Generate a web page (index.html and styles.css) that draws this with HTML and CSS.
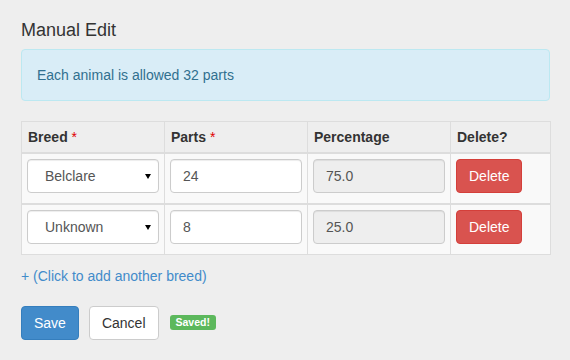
FILE: index.html
```html
<!DOCTYPE html>
<html>
<head>
<meta charset="utf-8">
<link rel="stylesheet" href="styles.css">
</head>
<body>
<div class="page">
  <h4 class="title">Manual Edit</h4>
  <div class="alert">Each animal is allowed 32 parts</div>
  <table class="breeds">
    <colgroup>
      <col class="c-wide"><col class="c-wide"><col class="c-wide"><col class="c-narrow">
    </colgroup>
    <thead>
      <tr>
        <th>Breed <span class="req">*</span></th>
        <th>Parts <span class="req">*</span></th>
        <th>Percentage</th>
        <th>Delete?</th>
      </tr>
    </thead>
    <tbody>
      <tr>
        <td><div class="select-wrap"><select class="control select"><option>Belclare</option></select><span class="arrow"></span></div></td>
        <td><input class="control" type="text" value="24"></td>
        <td><input class="control readonly" type="text" value="75.0" readonly></td>
        <td><button class="btn btn-danger">Delete</button></td>
      </tr>
    </tbody>
    <tbody>
      <tr>
        <td><div class="select-wrap"><select class="control select"><option>Unknown</option></select><span class="arrow"></span></div></td>
        <td><input class="control" type="text" value="8"></td>
        <td><input class="control readonly" type="text" value="25.0" readonly></td>
        <td><button class="btn btn-danger">Delete</button></td>
      </tr>
    </tbody>
  </table>
  <a class="add-link" href="#">+ (Click to add another breed)</a>
  <div class="actions">
    <button class="btn btn-primary">Save</button>
    <button class="btn btn-default">Cancel</button>
    <span class="label-success">Saved!</span>
  </div>
</div>
</body>
</html>
```
FILE: styles.css
```css
html, body {
  margin: 0;
  padding: 0;
  background: #eeeeee;
}
body {
  font-family: "Liberation Sans", Arial, sans-serif;
  font-size: 14px;
  line-height: 20px;
  color: #333333;
}
.page {
  padding: 20px 20px 0 21px;
  width: 529px;
}
.title {
  margin: 0 0 9px 0;
  font-size: 18px;
  font-weight: normal;
  line-height: 20px;
  color: #333333;
}
.alert {
  background: #d9edf7;
  border: 1px solid #bce8f1;
  border-radius: 4px;
  color: #31708f;
  padding: 15px 15px;
  line-height: 20px;
}
.breeds {
  margin-top: 20px;
  width: 529px;
  table-layout: fixed;
  border-collapse: collapse;
  border: 1px solid #dddddd;
}
.c-wide { width: 143px; }
.c-narrow { width: 100px; }
.breeds th {
  text-align: left;
  font-weight: bold;
  padding: 5px 5px 5px 6px;
  border: 1px solid #dddddd;
  border-bottom: 2px solid #dddddd;
  line-height: 20px;
}
.breeds td {
  padding: 5px 5px 10px 5px;
  border: 1px solid #dddddd;
  background: #f9f9f9;
  vertical-align: top;
}
.breeds tbody + tbody {
  border-top: 2px solid #dddddd;
}
.req {
  color: #e00000;
  font-weight: normal;
}
.control {
  display: block;
  box-sizing: border-box;
  width: 100%;
  height: 34px;
  margin: 0;
  padding: 6px 12px;
  font-family: "Liberation Sans", Arial, sans-serif;
  font-size: 14px;
  line-height: 20px;
  color: #555555;
  background: #ffffff;
  border: 1px solid #cccccc;
  border-radius: 4px;
  box-shadow: inset 0 1px 1px rgba(0,0,0,0.075);
}
.readonly {
  background: #eeeeee;
}
.select-wrap {
  position: relative;
}
.select {
  -webkit-appearance: none;
  appearance: none;
  padding-left: 17px;
}
.arrow {
  position: absolute;
  right: 8px;
  top: 15px;
  width: 0;
  height: 0;
  border-left: 3px solid transparent;
  border-right: 3px solid transparent;
  border-top: 5px solid #000000;
}
.btn {
  display: inline-block;
  box-sizing: border-box;
  height: 34px;
  padding: 6px 12px;
  font-family: "Liberation Sans", Arial, sans-serif;
  font-size: 14px;
  line-height: 20px;
  border: 1px solid transparent;
  border-radius: 4px;
  cursor: pointer;
}
.btn-danger {
  color: #ffffff;
  background: #d9534f;
  border-color: #d43f3a;
}
.btn-primary {
  color: #ffffff;
  background: #428bca;
  border-color: #357ebd;
}
.btn-default {
  color: #333333;
  background: #ffffff;
  border-color: #cccccc;
}
.add-link {
  display: block;
  margin-top: 11px;
  color: #428bca;
  text-decoration: none;
  line-height: 20px;
}
.actions {
  margin-top: 20px;
  display: flex;
  align-items: center;
  gap: 10px;
}
.label-success {
  display: inline-block;
  margin-left: 1px;
  margin-top: -1px;
  background: #5cb85c;
  color: #ffffff;
  font-weight: bold;
  font-size: 10.5px;
  line-height: 1;
  padding: 2px 6px 3px;
  border-radius: 3px;
}
```
